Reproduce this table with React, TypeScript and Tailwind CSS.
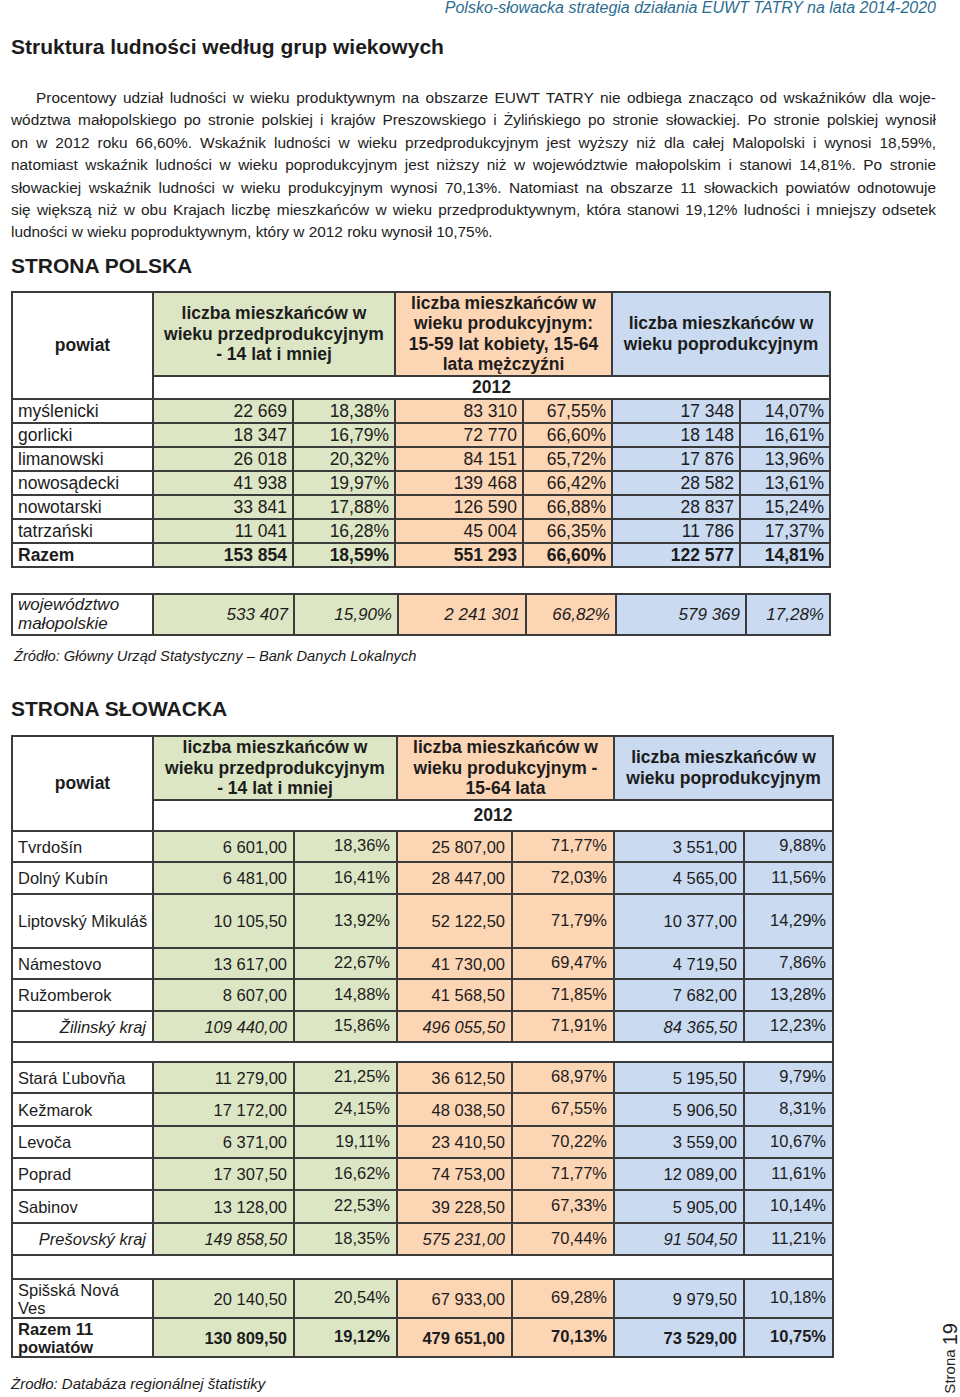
import React from 'react'

const LINE = 'border-2 border-[#3b3b3b]'
const GREEN = 'bg-[#dce6c4]'
const ORANGE = 'bg-[#fcd5b5]'
const BLUE = 'bg-[#c9daf1]'
const BGS = ['bg-white', GREEN, GREEN, ORANGE, ORANGE, BLUE, BLUE]

const paragraph = [
  'Procentowy udział ludności w wieku produktywnym na obszarze EUWT TATRY nie odbiega znacząco od wskaźników dla woje-',
  'wództwa małopolskiego po stronie polskiej i krajów Preszowskiego i Żylińskiego po stronie słowackiej. Po stronie polskiej wynosił',
  'on w 2012 roku 66,60%. Wskaźnik ludności w wieku przedprodukcyjnym jest wyższy niż dla całej Malopolski i wynosi 18,59%,',
  'natomiast wskaźnik ludności w wieku poprodukcyjnym jest niższy niż w województwie małopolskim i stanowi 14,81%. Po stronie',
  'słowackiej wskaźnik ludności w wieku produkcyjnym wynosi 70,13%. Natomiast na obszarze 11 słowackich powiatów odnotowuje',
  'się większą niż w obu Krajach liczbę mieszkańców w wieku przedproduktywnym, która stanowi 19,12% ludności i mniejszy odsetek',
  'ludności w wieku poproduktywnym, który w 2012 roku wynosił 10,75%.',
]

const polish = [
  ['myślenicki', '22 669', '18,38%', '83 310', '67,55%', '17 348', '14,07%'],
  ['gorlicki', '18 347', '16,79%', '72 770', '66,60%', '18 148', '16,61%'],
  ['limanowski', '26 018', '20,32%', '84 151', '65,72%', '17 876', '13,96%'],
  ['nowosądecki', '41 938', '19,97%', '139 468', '66,42%', '28 582', '13,61%'],
  ['nowotarski', '33 841', '17,88%', '126 590', '66,88%', '28 837', '15,24%'],
  ['tatrzański', '11 041', '16,28%', '45 004', '66,35%', '11 786', '17,37%'],
]

type SkRow = { cells: string[]; h: string; kind?: 'kraj' | 'total' | 'gap' }

const slovak: SkRow[] = [
  { cells: ['Tvrdošín', '6 601,00', '18,36%', '25 807,00', '71,77%', '3 551,00', '9,88%'], h: 'h-[31px]' },
  { cells: ['Dolný Kubín', '6 481,00', '16,41%', '28 447,00', '72,03%', '4 565,00', '11,56%'], h: 'h-[32px]' },
  { cells: ['Liptovský Mikuláš', '10 105,50', '13,92%', '52 122,50', '71,79%', '10 377,00', '14,29%'], h: 'h-[54px]' },
  { cells: ['Námestovo', '13 617,00', '22,67%', '41 730,00', '69,47%', '4 719,50', '7,86%'], h: 'h-[31px]' },
  { cells: ['Ružomberok', '8 607,00', '14,88%', '41 568,50', '71,85%', '7 682,00', '13,28%'], h: 'h-[32px]' },
  { cells: ['Žilinský kraj', '109 440,00', '15,86%', '496 055,50', '71,91%', '84 365,50', '12,23%'], h: 'h-[31px]', kind: 'kraj' },
  { cells: [], h: 'h-[20px]', kind: 'gap' },
  { cells: ['Stará Ľubovňa', '11 279,00', '21,25%', '36 612,50', '68,97%', '5 195,50', '9,79%'], h: 'h-[31px]' },
  { cells: ['Kežmarok', '17 172,00', '24,15%', '48 038,50', '67,55%', '5 906,50', '8,31%'], h: 'h-[33px]' },
  { cells: ['Levoča', '6 371,00', '19,11%', '23 410,50', '70,22%', '3 559,00', '10,67%'], h: 'h-[32px]' },
  { cells: ['Poprad', '17 307,50', '16,62%', '74 753,00', '71,77%', '12 089,00', '11,61%'], h: 'h-[32px]' },
  { cells: ['Sabinov', '13 128,00', '22,53%', '39 228,50', '67,33%', '5 905,00', '10,14%'], h: 'h-[33px]' },
  { cells: ['Prešovský kraj', '149 858,50', '18,35%', '575 231,00', '70,44%', '91 504,50', '11,21%'], h: 'h-[32px]', kind: 'kraj' },
  { cells: [], h: 'h-[24px]', kind: 'gap' },
  { cells: ['Spišská Nová|Ves', '20 140,50', '20,54%', '67 933,00', '69,28%', '9 979,50', '10,18%'], h: 'h-[39px]' },
  { cells: ['Razem 11|powiatów', '130 809,50', '19,12%', '479 651,00', '70,13%', '73 529,00', '10,75%'], h: 'h-[38px]', kind: 'total' },
]

function Lines({ text }: { text: string }) {
  const parts = text.split('|')
  return (
    <>
      {parts.map((p, i) => (
        <React.Fragment key={i}>
          {i > 0 && <br />}
          {p}
        </React.Fragment>
      ))}
    </>
  )
}

function Cols({ widths }: { widths: string[] }) {
  return (
    <colgroup>
      {widths.map((w, i) => (
        <col key={i} className={w} />
      ))}
    </colgroup>
  )
}

function HeadRow({ orange, h, year }: { orange: string; h: string; year: string }) {
  return (
    <>
      <tr className={h}>
        <td rowSpan={2} className={`${LINE} bg-white text-center font-bold text-[17.5px]`}>powiat</td>
        <td colSpan={2} className={`${LINE} ${GREEN} p-0 text-center font-bold text-[17.5px] leading-[20.5px]`}>
          liczba mieszkańców w<br />wieku przedprodukcyjnym<br />- 14 lat i mniej
        </td>
        <td colSpan={2} className={`${LINE} ${ORANGE} p-0 text-center font-bold text-[17.5px] leading-[20.5px]`}>
          <Lines text={orange} />
        </td>
        <td colSpan={2} className={`${LINE} ${BLUE} p-0 text-center font-bold text-[17.5px] leading-[20.5px]`}>
          liczba mieszkańców w<br />wieku poprodukcyjnym
        </td>
      </tr>
      <tr className={year}>
        <td colSpan={6} className={`${LINE} bg-white p-0 text-center font-bold text-[17.5px] leading-[20px]`}>2012</td>
      </tr>
    </>
  )
}

export default function App() {
  return (
    <div className="relative w-[960px] h-[1397px] overflow-hidden bg-white text-[#1c1c1c] font-['Liberation_Sans',Arial,sans-serif]">
      <div className="pl-[11px] pr-[24px]">
        <p className="text-right italic text-[16px] leading-[16px] text-[#2b6d90]">
          Polsko-słowacka strategia działania EUWT TATRY na lata 2014-2020
        </p>
        <h1 className="mt-[19px] text-[21px] leading-[24px] font-bold">Struktura ludności według grup wiekowych</h1>

        <div className="mt-[28px] text-[15.4px] leading-[22.4px] text-[#222]">
          {paragraph.map((l, i) => (
            <div
              key={i}
              className={`${i === 0 ? 'indent-[25px]' : ''} ${i < paragraph.length - 1 ? 'text-justify [text-align-last:justify]' : ''}`}
            >
              {l}
            </div>
          ))}
        </div>

        <h2 className="mt-[10px] text-[21px] leading-[24px] font-bold">STRONA POLSKA</h2>

        <table className="mt-[13px] w-[818px] table-fixed border-collapse text-[17.5px] leading-[20px]">
          <Cols widths={['w-[141px]', 'w-[140px]', 'w-[102px]', 'w-[128px]', 'w-[89px]', 'w-[128px]', 'w-[90px]']} />
          <tbody>
            <HeadRow
              orange="liczba mieszkańców w|wieku produkcyjnym:|15-59 lat kobiety, 15-64|lata mężczyźni"
              h="h-[82px]"
              year="h-[23px]"
            />
            {polish.map((r) => (
              <tr key={r[0]} className="h-[24px]">
                {r.map((c, i) => (
                  <td key={i} className={`${LINE} ${BGS[i]} py-0 ${i === 0 ? 'pl-[5px] text-left' : 'pr-[5px] text-right'}`}>
                    {c}
                  </td>
                ))}
              </tr>
            ))}
            <tr className="h-[24px] font-bold">
              {['Razem', '153 854', '18,59%', '551 293', '66,60%', '122 577', '14,81%'].map((c, i) => (
                <td key={i} className={`${LINE} ${BGS[i]} py-0 ${i === 0 ? 'pl-[5px] text-left' : 'pr-[5px] text-right'}`}>
                  {c}
                </td>
              ))}
            </tr>
          </tbody>
        </table>

        <table className="mt-[25px] w-[818px] table-fixed border-collapse text-[17px] leading-[19px] italic">
          <Cols widths={['w-[141px]', 'w-[141px]', 'w-[104px]', 'w-[128px]', 'w-[90px]', 'w-[130px]', 'w-[84px]']} />
          <tbody>
            <tr className="h-[41px]">
              {['województwo|małopolskie', '533 407', '15,90%', '2 241 301', '66,82%', '579 369', '17,28%'].map((c, i) => (
                <td key={i} className={`${LINE} ${BGS[i]} py-0 ${i === 0 ? 'pl-[5px] text-left' : 'pr-[5px] text-right'}`}>
                  <Lines text={c} />
                </td>
              ))}
            </tr>
          </tbody>
        </table>

        <p className="mt-[10px] pl-[3px] italic text-[14.7px] leading-[20px]">
          Źródło: Główny Urząd Statystyczny – Bank Danych Lokalnych
        </p>

        <h2 className="mt-[31px] text-[21px] leading-[24px] font-bold">STRONA SŁOWACKA</h2>

        <table className="mt-[14px] w-[821px] table-fixed border-collapse text-[16.5px] leading-[18px]">
          <Cols widths={['w-[141px]', 'w-[141px]', 'w-[103px]', 'w-[115px]', 'w-[102px]', 'w-[130px]', 'w-[89px]']} />
          <tbody>
            <HeadRow orange="liczba mieszkańców w|wieku produkcyjnym -|15-64 lata" h="h-[64px]" year="h-[31px]" />
            {slovak.map((r, ri) =>
              r.kind === 'gap' ? (
                <tr key={ri} className={r.h}>
                  <td colSpan={7} className={`${LINE} bg-white p-0`} />
                </tr>
              ) : (
                <tr key={ri} className={`${r.h} ${r.kind === 'total' ? 'font-bold' : ''}`}>
                  {r.cells.map((c, i) => {
                    const italic = r.kind === 'kraj' && (i === 0 || i % 2 === 1)
                    const align = i === 0 ? (r.kind === 'kraj' ? 'pr-[6px] text-right' : 'pl-[5px] text-left') : 'pr-[6px] text-right'
                    const lift = i > 0 && i % 2 === 0 ? 'pb-[2px]' : 'pt-[1px]'
                    return (
                      <td
                        key={i}
                        className={`${LINE} ${BGS[i]} py-0 ${lift} ${align} ${italic ? 'italic' : ''} ${i === 0 ? 'whitespace-nowrap' : ''}`}
                      >
                        <Lines text={c} />
                      </td>
                    )
                  })}
                </tr>
              ),
            )}
          </tbody>
        </table>

        <p className="mt-[16px] italic text-[15px] leading-[20px]">Żrodło: Databáza regionálnej štatistiky</p>
      </div>

      <div className="absolute right-0 bottom-[3px] rotate-180 [writing-mode:vertical-rl] leading-none text-[#222]">
        <span className="text-[15px]">Strona </span>
        <span className="text-[20px]">19</span>
      </div>
    </div>
  )
}
